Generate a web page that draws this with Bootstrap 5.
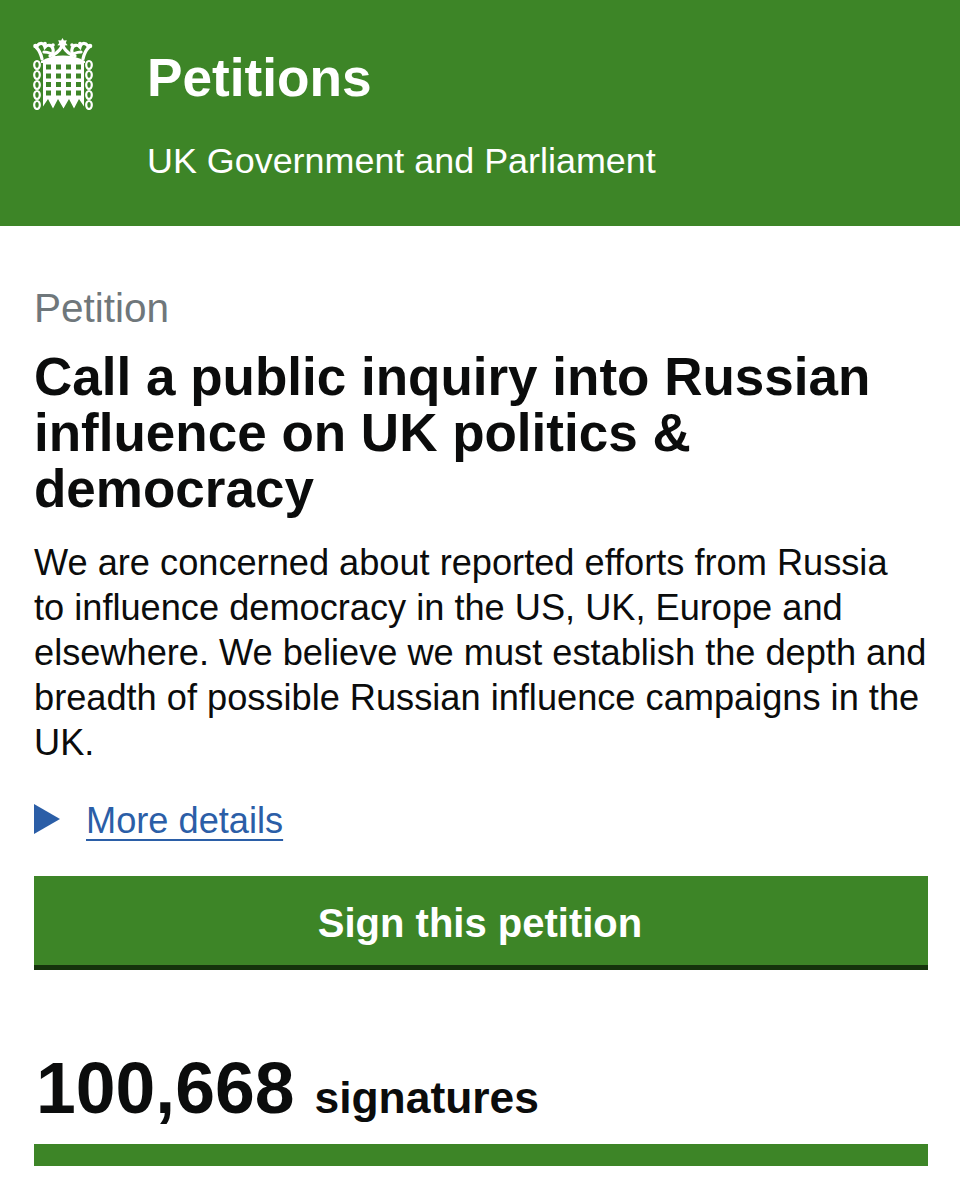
<!DOCTYPE html>
<html lang="en">
<head>
<meta charset="utf-8">
<title>Petitions</title>
<link href="https://cdn.jsdelivr.net/npm/bootstrap@5.3.0/dist/css/bootstrap.min.css" rel="stylesheet">
<style>
html,body{height:1200px;overflow:hidden}
body{font-family:"Liberation Sans",Arial,sans-serif;color:#0b0c0c;background:#fff}
.site-head{background:#3d8527;height:226px;color:#fff;padding:38px 0 0 33px;gap:54px}
.crest{width:60px;height:72px;flex:none}
.brand-name{font-size:53.200px;font-weight:700;line-height:60px;margin:10px 0 0}
.brand-sub{font-size:35.900px;line-height:42px;margin:32px 0 0}
.main-wrap{padding:0 32px 0 34px}
.kicker{font-size:40.500px;line-height:46px;color:#6f777b;margin:59px 0 0}
.pet-title{font-size:53px;font-weight:700;line-height:56px;margin:18px 0 0}
.pet-body{font-size:36.200px;line-height:45px;margin:23px 0 0}
.more-row{margin-top:34px;gap:26px;height:44px}
.tri{width:0;height:0;border-left:26px solid #2b5ea7;border-top:15.500px solid transparent;border-bottom:15.500px solid transparent;margin-bottom:4px}
.more-link{font-size:36.200px;line-height:44px;color:#2b5ea7;text-decoration-thickness:2px;text-underline-offset:6px}
.sign-btn{display:block;width:100%;height:94px;margin-top:33px;background:#3d8527;color:#fff;border:0;border-bottom:5px solid #15330c;border-radius:0;font-size:40px;font-weight:700;line-height:94px;padding:0 2px 0 0;text-align:center}
.sign-btn:hover{background:#3d8527;color:#fff}
.count-row{margin-top:78px;align-items:baseline;gap:20px;padding-left:2px}
.count-num{font-size:71.500px;font-weight:700;line-height:80px}
.count-word{font-size:44.400px;font-weight:700;line-height:50px}
.pbar{height:22px;background:#3d8527;margin-top:16px;border-radius:0}
</style>
</head>
<body>
<header class="site-head d-flex">
  <svg class="crest" viewBox="0 0 60 72" aria-hidden="true">
    <g fill="none" stroke="#fff" stroke-width="3.200" stroke-linecap="round">
      <path d="M29.500 6C28 12 24 15 20 17M29.500 6C31 12 35 15 39 17"/>
      <path d="M3 9C6 12 8 16 9 21M56 9C53 12 51 16 50 21"/>
      <path d="M4 8C7 4 11 5 12 9C15 6 19 7 20 11C21 14 19 17 17 18M55 8C52 4 48 5 47 9C44 6 40 7 39 11C38 14 40 17 42 18"/>
      <path d="M11 14C15 14 20 16 22 20M48 14C44 14 39 16 37 20"/>
    </g>
    <g fill="#fff">
      <path d="M29.500 0l1.400 2.600 2.900-.4-1 2.800 1.900 2.200-2.900.3-2.300 3-2.300-3-2.900-.3 1.900-2.200-1-2.800 2.900.4z"/>
      <circle cx="2.500" cy="8" r="2.300"/><circle cx="57" cy="8" r="2.300"/>
      <circle cx="12" cy="5.500" r="1.800"/><circle cx="47" cy="5.500" r="1.800"/>
      <circle cx="20" cy="7" r="1.800"/><circle cx="39" cy="7" r="1.800"/>
      <path d="M8 23C15 19 23 17.500 30 17.500S45 19 52 23V25H8z"/>
      <path fill-rule="evenodd" d="M10 24H51V68.500L46 61 41 70.500 36 61 30.500 70.500 25 61 20 70.500 15 61 10 68.500zM13 26.500v5h5v-5zm10 0v5h5v-5zm10 0v5h5v-5zm10 0v5h5v-5zM13 35.500v5h5v-5zm10 0v5h5v-5zm10 0v5h5v-5zm10 0v5h5v-5zM13 44v5h5v-5zm10 0v5h5v-5zm10 0v5h5v-5zm10 0v5h5v-5zM13 52.500v5h5v-5zm10 0v5h5v-5zm10 0v5h5v-5zm10 0v5h5v-5z"/>
    </g>
    <g fill="none" stroke="#fff" stroke-width="2.200">
      <ellipse cx="4" cy="27" rx="2.800" ry="4"/><ellipse cx="4" cy="37" rx="2.800" ry="4"/><ellipse cx="4" cy="47" rx="2.800" ry="4"/><ellipse cx="4" cy="57" rx="2.800" ry="4"/><ellipse cx="4" cy="67" rx="2.800" ry="4"/>
      <ellipse cx="56" cy="27" rx="2.800" ry="4"/><ellipse cx="56" cy="37" rx="2.800" ry="4"/><ellipse cx="56" cy="47" rx="2.800" ry="4"/><ellipse cx="56" cy="57" rx="2.800" ry="4"/><ellipse cx="56" cy="67" rx="2.800" ry="4"/>
    </g>
  </svg>
  <div>
    <p class="brand-name">Petitions</p>
    <p class="brand-sub">UK Government and Parliament</p>
  </div>
</header>
<main class="main-wrap">
  <p class="kicker">Petition</p>
  <h1 class="pet-title">Call a public inquiry into Russian influence on UK politics &amp; democracy</h1>
  <p class="pet-body">We are concerned about reported efforts from Russia<br>to influence democracy in the US, UK, Europe and elsewhere. We believe we must establish the depth and breadth of possible Russian influence campaigns in the UK.</p>
  <div class="more-row d-flex align-items-center">
    <span class="tri"></span>
    <a href="#" class="more-link">More details</a>
  </div>
  <a href="#" class="btn sign-btn">Sign this petition</a>
  <div class="count-row d-flex">
    <span class="count-num">100,668</span>
    <span class="count-word">signatures</span>
  </div>
  <div class="pbar"></div>
</main>
<script src="https://cdn.jsdelivr.net/npm/bootstrap@5.3.0/dist/js/bootstrap.bundle.min.js"></script>
</body>
</html>
